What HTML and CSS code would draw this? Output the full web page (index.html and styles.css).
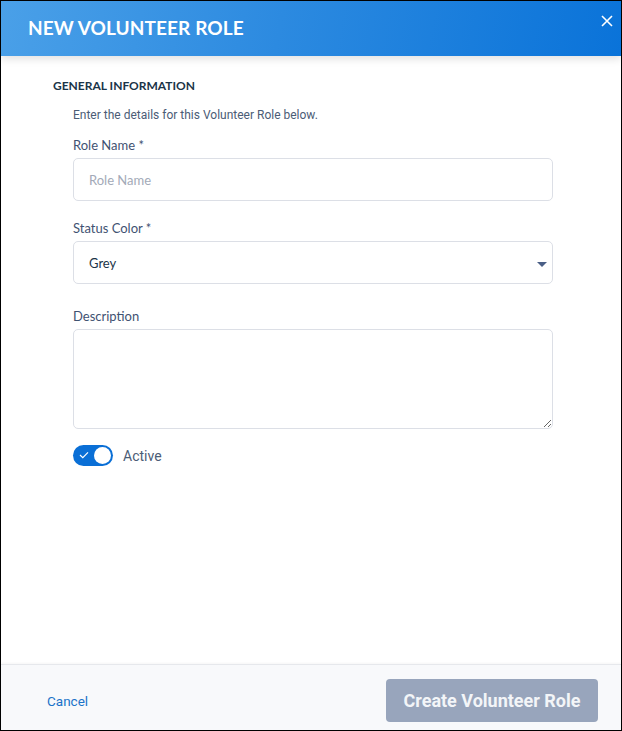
FILE: index.html
```html
<!DOCTYPE html>
<html lang="en">
<head>
    <meta charset="UTF-8">
    <meta name="viewport" content="width=device-width, initial-scale=1.0">
    <title>New Volunteer Role</title>
    <link rel="stylesheet" href="styles.css">
</head>
<body>
    <div class="modal">
        <div class="modal-header">
            <h1>New Volunteer Role</h1>
            <button type="button" class="close-btn" aria-label="Close">
                <svg width="12" height="12" viewBox="0 0 12 12"><path d="M1 1L11 11M11 1L1 11" stroke="#fff" stroke-width="1.6" fill="none"/></svg>
            </button>
        </div>

        <div class="modal-body">
            <h2 class="section-title">General Information</h2>
            <div class="section">
                <p class="intro">Enter the details for this Volunteer Role below.</p>

                <label for="roleName">Role Name *</label>
                <input type="text" id="roleName" placeholder="Role Name">

                <label for="statusColor">Status Color *</label>
                <div class="select-wrap">
                    <select id="statusColor">
                        <option>Grey</option>
                        <option>Blue</option>
                        <option>Green</option>
                    </select>
                    <span class="caret"></span>
                </div>

                <label for="description">Description</label>
                <textarea id="description"></textarea>

                <div class="toggle-row">
                    <span class="toggle">
                        <svg class="check" width="10" height="8" viewBox="0 0 10 8"><path d="M1 4L3.8 6.6L9 1.4" stroke="#fff" stroke-width="1.2" fill="none"/></svg>
                        <span class="knob"></span>
                    </span>
                    <span class="toggle-label">Active</span>
                </div>
            </div>
        </div>

        <div class="modal-footer">
            <a href="#" class="cancel">Cancel</a>
            <button type="button" class="btn-primary" disabled>Create Volunteer Role</button>
        </div>
    </div>
</body>
</html>
```

FILE: styles.css
```css
* {
    box-sizing: border-box;
}

html, body {
    margin: 0;
    padding: 0;
}

body {
    width: 622px;
    height: 731px;
    font-family: Roboto, "Liberation Sans", sans-serif;
    background-color: #fff;
}

.modal {
    width: 622px;
    height: 731px;
    border: 1px solid #000;
    display: flex;
    flex-direction: column;
    background-color: #fff;
}

.modal-header {
    height: 55px;
    flex-shrink: 0;
    display: flex;
    align-items: center;
    justify-content: space-between;
    padding: 0 0 0 27px;
    background: linear-gradient(100deg, #4aa0e8 0%, #2c8ae0 45%, #0a73d9 100%);
    box-shadow: 0 3px 8px rgba(0, 0, 0, 0.12);
    position: relative;
    z-index: 1;
}

.modal-header h1 {
    margin: 0 0 2px;
    color: #fff;
    font-family: Lato, sans-serif;
    font-weight: 700;
    font-size: 19px;
    text-transform: uppercase;
    letter-spacing: 0.1px;
}

.close-btn {
    align-self: flex-start;
    margin-top: 14px;
    margin-right: 8px;
    padding: 0;
    border: none;
    background: none;
    cursor: pointer;
    line-height: 0;
}

.modal-body {
    flex: 1;
    padding: 23px 68px 0 52px;
}

.section-title {
    margin: 0;
    font-family: Lato, sans-serif;
    font-size: 12px;
    font-weight: 700;
    text-transform: uppercase;
    color: #1b3448;
    line-height: 14px;
}

.section {
    padding-left: 20px;
}

.intro {
    margin: 15px 0 15px;
    font-size: 12px;
    color: #4b5c76;
    line-height: 14px;
}

label {
    display: block;
    margin: 0 0 5px;
    font-family: Lato, sans-serif;
    font-size: 13px;
    color: #3f5272;
    line-height: 16px;
}

input, select, textarea {
    display: block;
    width: 100%;
    border: 1px solid #dcdfe6;
    border-radius: 5px;
    font-family: Lato, sans-serif;
    font-size: 13px;
    color: #1b3448;
    background-color: #fff;
}

input {
    height: 43px;
    padding: 1px 15px 0;
    margin-bottom: 19px;
}

input::placeholder {
    color: #a3aab8;
}

.select-wrap {
    position: relative;
    margin-bottom: 24px;
}

select {
    height: 43px;
    padding: 1px 15px 0;
    appearance: none;
    -webkit-appearance: none;
}

.caret {
    position: absolute;
    right: 6px;
    top: 21px;
    width: 0;
    height: 0;
    border-left: 5px solid transparent;
    border-right: 5px solid transparent;
    border-top: 5px solid #4a5f86;
}

textarea {
    height: 100px;
    resize: vertical;
    padding: 10px 15px;
}

.toggle-row {
    display: flex;
    align-items: center;
    margin-top: 16px;
}

.toggle {
    position: relative;
    width: 40px;
    height: 21px;
    border-radius: 11px;
    background-color: #0a6fd6;
    flex-shrink: 0;
}

.check {
    position: absolute;
    left: 6px;
    top: 6px;
}

.knob {
    position: absolute;
    right: 2px;
    top: 2px;
    width: 17px;
    height: 17px;
    border-radius: 50%;
    background-color: #fff;
}

.toggle-label {
    margin-left: 10px;
    font-size: 14px;
    color: #4b5c76;
}

.modal-footer {
    height: 66px;
    flex-shrink: 0;
    display: flex;
    align-items: center;
    justify-content: space-between;
    padding: 14px 23px 8px 46px;
    background-color: #f8f9fb;
    border-top: 1px solid #e6e8ec;
    box-shadow: 0 -1px 2px rgba(0, 0, 0, 0.04);
}

.cancel {
    color: #1b73c9;
    font-size: 13.5px;
    text-decoration: none;
}

.btn-primary {
    width: 212px;
    height: 43px;
    border: none;
    border-radius: 4px;
    background-color: #98a5bc;
    color: #f3f5f8;
    font-family: Roboto, sans-serif;
    font-weight: 700;
    font-size: 18px;
    cursor: default;
}
```
